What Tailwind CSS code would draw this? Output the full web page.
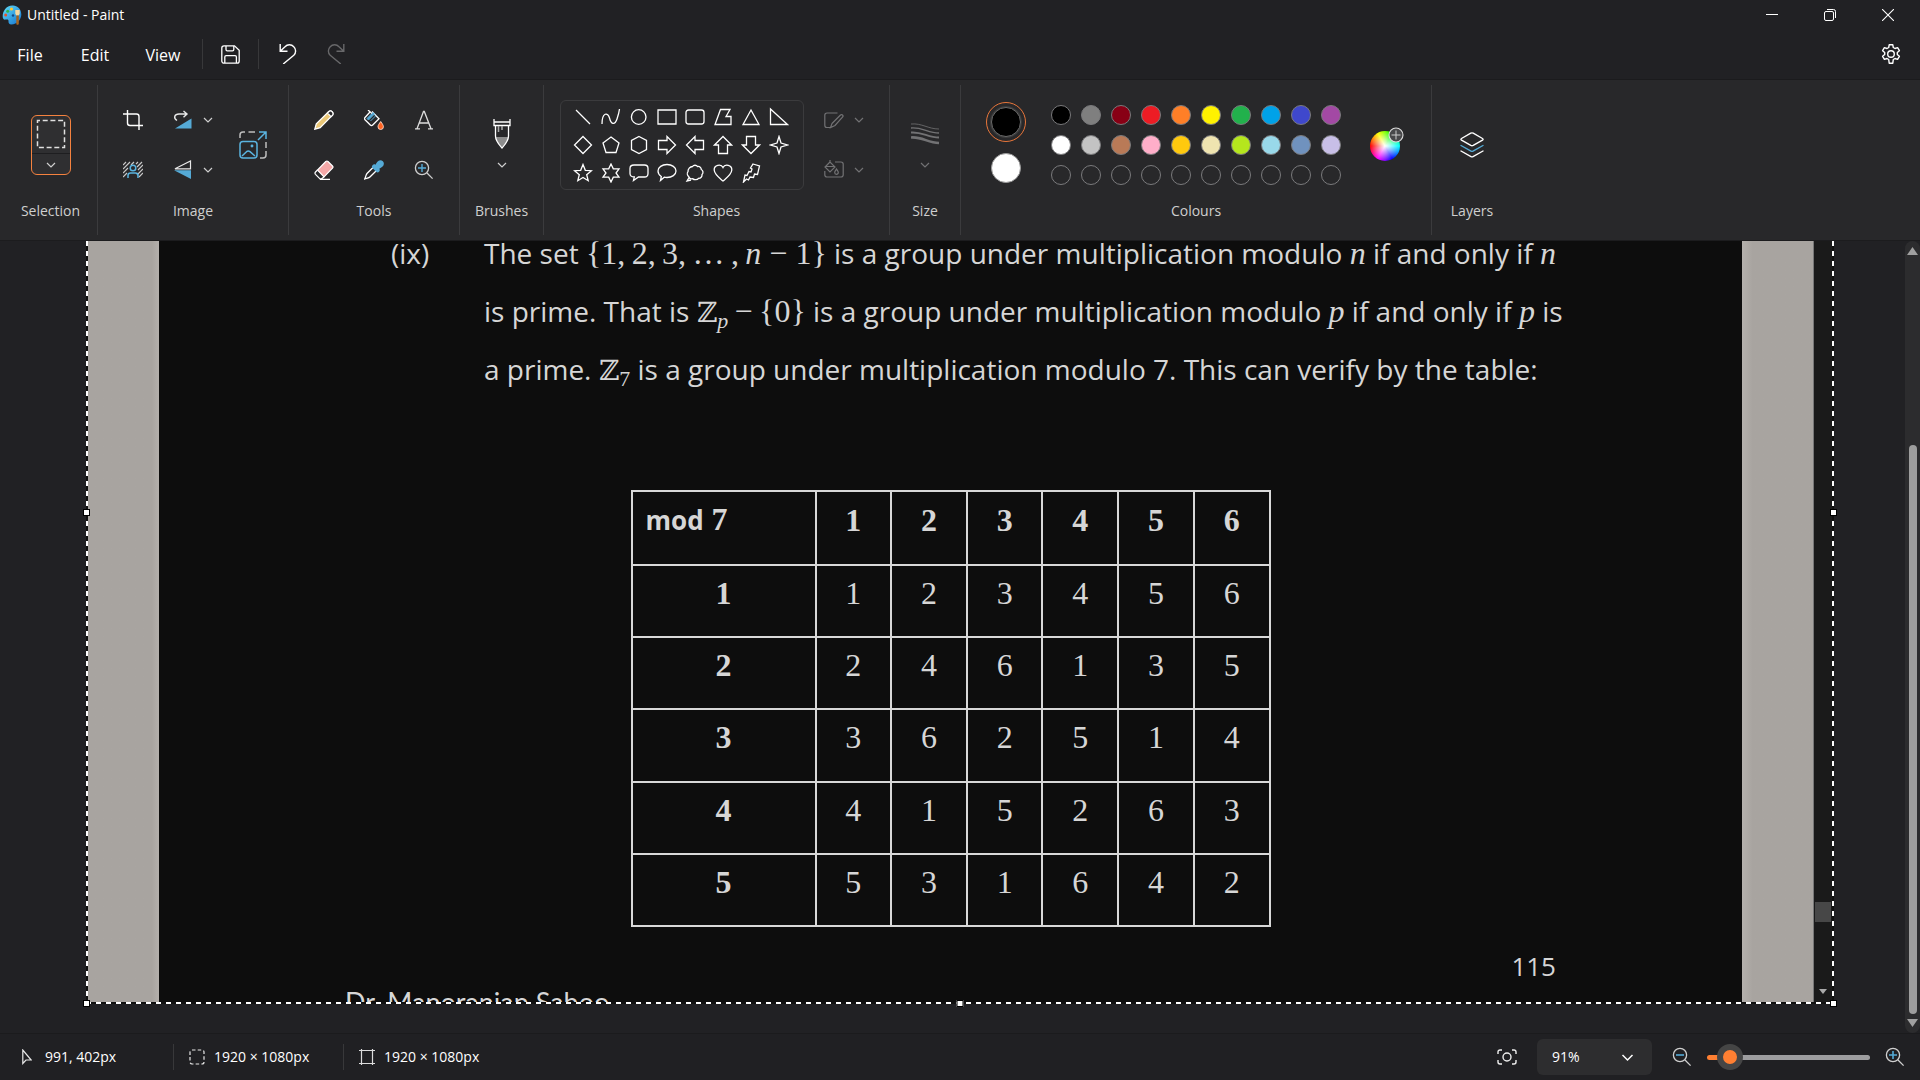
<!DOCTYPE html>
<html lang="en-GB">
<head>
<meta charset="utf-8">
<title>Untitled - Paint</title>
<script src="https://cdn.jsdelivr.net/npm/@tailwindcss/browser@4"></script>
</head>
<body class="flex h-screen flex-col overflow-hidden bg-[#212124] font-['Open_Sans','Noto_Sans',sans-serif] text-sm text-white">

<!-- Icon shapes used more than once -->
<svg class="hidden">
  <symbol id="chev" viewBox="0 0 12 12"><path d="M2 4l4 4 4-4" fill="none" stroke="currentColor" stroke-width="1.2"/></symbol>
  <symbol id="lens" viewBox="0 0 20 20"><g fill="none" stroke="currentColor" stroke-width="1.3"><circle cx="8" cy="8" r="6.6"/><path d="M13 13l5.6 5.6"/></g></symbol>
</svg>

<header>
  <div class="flex h-[30px] items-center justify-between">
    <div class="flex items-center gap-[5px] pl-[2px]">
      <svg class="size-5" viewBox="0 0 20 20">
        <defs><linearGradient id="pal" x1="0" y1="0" x2="1" y2="1"><stop offset="0" stop-color="#5fdcf8"/><stop offset="1" stop-color="#1673cf"/></linearGradient></defs>
        <path d="M11 .6C4.500 .2 .6 6 .7 11.500c0 2 1.100 3.600 3 3.100 1.800-.5 3-.2 2.800 1.600-.2 1.900.8 3.200 2.800 3.200 6 0 10-5.200 10-10C19.300 4.100 15.500.8 11 .6z" fill="url(#pal)"/>
        <circle cx="9.500" cy="4" r="1.600" fill="#ffc52e"/><circle cx="5.700" cy="6.200" r="1.500" fill="#32b34a"/><circle cx="3.700" cy="10" r="1.500" fill="#e4542c"/><circle cx="11" cy="10.500" r="1.200" fill="#134a86"/>
        <path d="M13.300 5h4.400v3.500l-.8 2h-2.800l-.8-2z" fill="#f6d7a0"/><path d="M14.300 10.500h2.500v8.200c0 1.300-2.500 1.300-2.500 0z" fill="#a5631d"/>
      </svg>
      <h1>Untitled - Paint</h1>
    </div>
    <div class="flex pr-[3px]">
      <button aria-label="Minimise" class="flex h-[30px] w-[58px] items-center justify-center"><svg class="size-3" viewBox="0 0 12 12"><path d="M0 5.500h12" stroke="#fff"/></svg></button>
      <button aria-label="Restore" class="flex h-[30px] w-[58px] items-center justify-center"><svg class="size-3" viewBox="0 0 12 12" fill="none" stroke="#fff"><rect x=".5" y="2.500" width="9" height="9" rx="1.500"/><path d="M3 .5h6.500a2 2 0 0 1 2 2V9"/></svg></button>
      <button aria-label="Close" class="flex h-[30px] w-[58px] items-center justify-center"><svg class="size-3" viewBox="0 0 12 12"><path d="M0 0l12 12M12 0L0 12" stroke="#fff" stroke-width="1.100"/></svg></button>
    </div>
  </div>

  <nav class="flex h-[50px] items-center justify-between border-b border-[#1b1b1d] pb-px">
    <div class="flex items-center text-base">
      <button class="w-[60px] pt-[2px]">File</button>
      <button class="w-[70px] pt-[2px]">Edit</button>
      <button class="w-[66px] pt-[2px]">View</button>
      <span class="ml-[6px] h-[30px] w-px bg-[#38383a]"></span>
      <button aria-label="Save" class="flex w-[55px] justify-center"><svg class="size-[19px]" viewBox="0 0 19 19" fill="none" stroke="#fff" stroke-width="1.300"><path d="M3 .8h10.500l4.700 4.400V16a2.200 2.200 0 0 1-2.200 2.200H3A2.200 2.200 0 0 1 .8 16V3A2.200 2.200 0 0 1 3 .8z"/><path d="M5 1v3.500c0 .8.500 1.300 1.300 1.300h5.200c.8 0 1.300-.5 1.300-1.300V1M3.800 18v-6c0-.8.500-1.300 1.300-1.300h9c.8 0 1.300.5 1.300 1.300v6"/></svg></button>
      <span class="h-[30px] w-px bg-[#38383a]"></span>
      <button aria-label="Undo" class="ml-[5px] flex w-12 justify-center"><svg class="size-5" viewBox="0 0 20 20" fill="none" stroke="#fff" stroke-width="1.400"><path d="M2.200 0v7.300h7.300M2.500 7L7 2.700a6 6 0 0 1 8.800 0 6 6 0 0 1 0 8.600L5.200 20"/></svg></button>
      <button aria-label="Redo" disabled class="flex w-12 justify-center text-[#68686a]"><svg class="size-5" viewBox="0 0 20 20" fill="none" stroke="currentColor" stroke-width="1.400"><path d="M17.800 0v7.300h-7.300M17.500 7L13 2.700a6 6 0 0 0-8.800 0 6 6 0 0 0 0 8.600L14.800 20"/></svg></button>
    </div>
    <button aria-label="Settings" class="mr-[19px]"><svg class="size-5" viewBox="0 0 20 20" fill="none" stroke="#fff" stroke-width="1.400" stroke-linejoin="round"><path d="M8.200.8h3.600l.5 2.700 1.700 1 2.600-.9 1.800 3.100-2.100 1.800v2l2.100 1.800-1.800 3.100-2.600-.9-1.700 1-.5 3.700H8.200l-.5-3.700-1.700-1-2.600.9-1.800-3.100 2.100-1.800v-2L1.600 6.700l1.800-3.100 2.600.9 1.700-1z"/><circle cx="10" cy="10" r="3.300"/></svg></button>
  </nav>
</header>

<section aria-label="Tools" class="flex h-[161px] shrink-0 border-b border-[#1c1c1e] bg-[#28282a] py-[5px] text-[#cfcfcf]">
  <div class="flex w-[98px] flex-col border-r border-[#3b3b3d] pl-1">
    <div class="flex h-[119px] items-center justify-center">
      <button aria-label="Rectangular selection" class="flex h-[60px] w-10 flex-col items-center rounded-md border border-[#f5823f] bg-[#2f2f31]">
        <svg class="mt-[3px] size-[30px]" viewBox="0 0 30 30"><rect x="1.500" y="1.500" width="27" height="27" fill="none" stroke="#e0e0e0" stroke-width="1.500" stroke-dasharray="5 2.710" stroke-dashoffset="2.500"/></svg>
        <span class="mt-[4px] h-px w-full bg-[#1e1e20]"></span>
        <svg class="mt-[5px] size-3"><use href="#chev"/></svg>
      </button>
    </div>
    <div class="text-center leading-[14px]">Selection</div>
  </div>

  <div class="flex w-[191px] flex-col border-r border-[#3b3b3d]">
    <div class="flex h-[119px] items-center pl-[15px]">
      <div class="flex flex-col">
        <button aria-label="Crop" class="flex h-[50px] w-10 items-center justify-center"><svg class="size-5" viewBox="0 0 20 20" fill="none" stroke="#fff" stroke-width="1.400"><path d="M0 4h13.500c1.500 0 2.500 1 2.500 2.500V20M4.500 0v13c0 1.500 1 2.500 2.500 2.500h13"/></svg></button>
        <button aria-label="Remove background" class="flex h-[50px] w-10 items-center justify-center"><svg class="size-5" viewBox="0 0 20 20" fill="none" stroke="#c9c9c9" stroke-width="1.200"><path d="M0 5l3-3M0 9l7-7M0 13l5-5M0 17l4-4M8 5l3-3M13 4l2-2M14 7l5-5M15 10l5-5M14 15l6-6M16 17l4-4"/><g stroke="#5ab4e0" stroke-width="1.500"><circle cx="10" cy="8" r="2.800"/><path d="M5 18v-2.500C5 14 6 13 7.500 13h5c1.500 0 2.500 1 2.500 2.500V18"/></g></svg></button>
      </div>
      <div class="ml-5 flex flex-col">
        <button aria-label="Rotate" class="flex h-[50px] items-center gap-[9px]"><svg class="size-5" viewBox="0 0 20 20"><path d="M18.500 8.500V18.500H2z" fill="#55aad6"/><path d="M4 10.500C0 8 1.500 4 6 4h8M10.500 1L14 4l-3.500 3.200" fill="none" stroke="#e8e8e8" stroke-width="1.400"/></svg><svg class="size-3"><use href="#chev"/></svg></button>
        <button aria-label="Flip" class="flex h-[50px] items-center gap-[9px]"><svg class="size-5" viewBox="0 0 20 20"><path d="M17.500 1v7.800H2z" fill="none" stroke="#e8e8e8" stroke-width="1.200"/><path d="M1 10.300h17V19z" fill="#55aad6"/></svg><svg class="size-3"><use href="#chev"/></svg></button>
      </div>
      <button aria-label="Resize and skew" class="ml-[25px]"><svg class="size-7" viewBox="0 0 28 28" fill="none" stroke-width="1.500"><path d="M1 7V4c0-2 1-3 3-3h2M9.500 1H16M27 11v6M27 20v4c0 2-1 3-3 3h-3" stroke="#bdbdbd"/><g stroke="#5ab4e0"><path d="M19 9L27 1M20 1h7v7"/><rect x="1" y="10.500" width="17" height="16.500" rx="3"/><path d="M3 25l4.500-4.300c1.200-1 2.300-1 3.500 0l5 4.300"/><circle cx="13" cy="15" r=".7" fill="#5ab4e0"/></g></svg></button>
    </div>
    <div class="text-center leading-[14px]">Image</div>
  </div>

  <div class="flex w-[171px] flex-col border-r border-[#3b3b3d]">
    <div class="grid h-[119px] grid-cols-[50px_50px_50px] grid-rows-[50px_50px] content-center justify-center">
      <button aria-label="Pencil" class="flex items-center justify-center"><svg class="size-5" viewBox="0 0 20 20"><path d="M.8 19.200l1.500-5.400L14.800 1.500c2.200-1.700 5.300 1.100 3.700 3.700L6.200 17.700z" fill="#ebc878" stroke="#fff" stroke-width="1.300"/><path d="M13.500 3l1.500-1.500c2.200-1.500 5 1 3.600 3.600L17 6.700z" fill="#28282a" stroke="#fff" stroke-width="1.200"/></svg></button>
      <button aria-label="Fill" class="flex items-center justify-center"><svg class="size-5" viewBox="0 0 20 20"><path d="M6 2L1 7.500c-.7.800-.7 1.500 0 2.200l5.300 5.300c.8.800 1.600.8 2.400 0L15 8.700 8 1.500" fill="none" stroke="#fff" stroke-width="1.300"/><path d="M3 8.500L9 2.500l1.500 1.500L4.500 10zM6.500 11L12 5.500" fill="#55aad6" stroke="#55aad6"/><path d="M4 0l4 3.500" stroke="#fff" stroke-width="1.300"/><path d="M16.700 11.500c1.500 2.300 2.700 3.600 2.700 5.300a2.700 2.700 0 0 1-5.400 0c0-1.700 1.200-3 2.700-5.300z" fill="#ff6422" stroke="#ffd9c8" stroke-width=".9"/></svg></button>
      <button aria-label="Text" class="flex items-center justify-center"><svg class="size-5" viewBox="0 0 20 20" fill="none" stroke="#dcdcdc" stroke-width="1.300"><path d="M3 18.800L9.500 1.500h.8l6.700 17.300M5.200 13h9.400M1 18.800h5M14 18.800h5"/></svg></button>
      <button aria-label="Eraser" class="flex items-center justify-center"><svg class="size-5" viewBox="0 0 20 20"><path d="M11.800 1.500c.7-.7 1.500-.7 2.200 0l4.500 4.500c.7.700.7 1.500 0 2.200L10 17 3.500 10z" fill="#f4a8a8" stroke="#fff" stroke-width="1.200"/><path d="M3.500 10L1.500 12c-.7.800-.7 1.500 0 2.300l4 4c.6.600 1.500.8 2.300.1L10 17M5.800 19.300H16" fill="none" stroke="#fff" stroke-width="1.200"/></svg></button>
      <button aria-label="Colour picker" class="flex items-center justify-center"><svg class="size-5" viewBox="0 0 20 20"><path d="M9.500 7L3 13.500c-1 1.200-.8 2.200-2.300 5.500 3-1 4.500-1.200 5.500-2.300L13 10" fill="none" stroke="#fff" stroke-width="1.300"/><path d="M8.500 5.200c1-1.200 2-1.200 3-.5 1-2 2.500-4.500 4.700-4.500 2.500 0 4 1.700 3.600 4-.3 2-2.200 3.300-4.500 4.500.8 1 .7 2-.2 3-1 1-2 .9-3 0L8.500 8c-.8-.8-.8-1.900 0-2.800z" fill="#55aad6"/></svg></button>
      <button aria-label="Magnifier" class="flex items-center justify-center"><svg class="size-5" viewBox="0 0 20 20"><use href="#lens" width="20" height="20"/><path d="M8 4v8M4 8h8" stroke="#55aad6" stroke-width="1.400"/></svg></button>
    </div>
    <div class="text-center leading-[14px]">Tools</div>
  </div>

  <div class="flex w-[84px] flex-col border-r border-[#3b3b3d]">
    <button aria-labelledby="brushes" class="flex h-[119px] flex-col items-center justify-center gap-[10px]">
      <svg class="h-[30px] w-[18px]" viewBox="0 0 18 30"><path d="M3 18h12c0 5-3 7-6 10.500C6 25 3 23 3 18z" fill="#8d8d8d"/><path d="M1 0v6.500h16V0M1 3h16M2.500 6.500V17c0 5 3 8 6.500 12 3.500-4 6.500-7 6.500-12V6.500" fill="none" stroke="#fff" stroke-width="1.300"/><path d="M5.500 7v6M9 7v4" stroke="#aaa" stroke-width="1.500"/></svg>
      <svg class="size-3"><use href="#chev"/></svg>
    </button>
    <div id="brushes" class="text-center leading-[14px]">Brushes</div>
  </div>

  <div class="flex w-[346px] flex-col border-r border-[#3b3b3d]">
    <div class="flex h-[119px] items-center gap-5 pl-4">
      <div id="shapes" class="grid h-[90px] w-[244px] grid-cols-[repeat(8,28px)] content-center rounded-md border border-[#3b3b3d] pl-2 text-white"></div>
      <div class="flex flex-col text-[#727274]">
        <button aria-label="Shape outline" disabled class="flex h-[50px] items-center gap-[9px]"><svg class="size-5" viewBox="0 0 20 20" fill="none" stroke="currentColor" stroke-width="1.200"><path d="M13.500 3H3C1.500 3 .8 4 .8 5.200v10C.8 16.500 1.700 17.500 3 17.500h3.500"/><path d="M8 13.500L16.500 5c1.500-1.200 3.200.5 2.200 2L11 15.500 6.500 17.500z"/></svg><svg class="size-3"><use href="#chev"/></svg></button>
        <button aria-label="Shape fill" disabled class="flex h-[50px] items-center gap-[9px]"><svg class="size-5" viewBox="0 0 20 20" fill="none" stroke="currentColor" stroke-width="1.200"><path d="M11 2h6c1.500 0 2.200.9 2.200 2.200v10.600c0 1.400-.9 2.200-2.200 2.200H3C1.600 17 .8 16.200.8 14.800V11"/><path d="M6 0v3M6 2L1 7l5 5 5-5zM1.500 6.500h9"/><path d="M12.500 9c1 1.600 1.800 2.300 1.800 3.500a1.800 1.800 0 0 1-3.600 0c0-1.200.8-1.900 1.800-3.500z"/></svg><svg class="size-3"><use href="#chev"/></svg></button>
      </div>
    </div>
    <div class="text-center leading-[14px]">Shapes</div>
  </div>

  <div class="flex w-[71px] flex-col border-r border-[#3b3b3d]">
    <button aria-labelledby="size" disabled class="flex h-[119px] flex-col items-center justify-center gap-[10px] text-[#727274]">
      <svg class="h-[30px] w-7" viewBox="0 0 28 30" fill="none" stroke="currentColor"><path d="M0 5c11-1 17 5 28 5" stroke-width=".8"/><path d="M0 9c11-1 17 5 28 5" stroke-width="1.400"/><path d="M0 13.500c11-1 17 5 28 5" stroke-width="2"/><path d="M0 18.500c11-1 17 5.500 28 5.500" stroke-width="2.600"/></svg>
      <svg class="size-3"><use href="#chev"/></svg>
    </button>
    <div id="size" class="text-center leading-[14px]">Size</div>
  </div>

  <div class="flex w-[471px] flex-col border-r border-[#3b3b3d]">
    <div class="flex h-[119px] items-center pl-[25px]">
      <div class="flex flex-col items-center gap-[11px] pb-[5px]">
        <button aria-label="Colour 1" class="flex size-10 items-center justify-center rounded-full border border-[#e8763a]"><span class="size-[30px] rounded-full border border-[#6a6a6a] bg-black ring-1 ring-[#3c3c3c]"></span></button>
        <button aria-label="Colour 2" class="size-[30px] rounded-full border border-[#9a9a9a] bg-white"></button>
      </div>
      <div id="swatches" class="ml-5 grid grid-cols-[repeat(10,30px)] grid-rows-[repeat(3,30px)]"></div>
      <button aria-label="Edit colours" class="relative mt-[3px] ml-6 size-[30px] rounded-full bg-[radial-gradient(circle,#ffffff_0%,#ffffff00_70%),conic-gradient(#80ff00_0deg,#00ff00_30deg,#00ffff_90deg,#0000ff_150deg,#ff00ff_210deg,#ff0000_270deg,#ffff00_330deg,#80ff00_360deg)]">
        <svg class="absolute -top-1 -right-1 size-4" viewBox="0 0 16 16"><circle cx="8" cy="8" r="7" fill="#48484a" stroke="#ddd" stroke-width="1.100"/><path d="M8 3.500v9M3.500 8h9" stroke="#ccc"/></svg>
      </button>
    </div>
    <div class="text-center leading-[14px]">Colours</div>
  </div>

  <div class="flex w-20 flex-col">
    <button aria-labelledby="layers" class="flex h-[119px] items-center justify-center"><svg class="h-[26px] w-6" viewBox="0 0 24 26" fill="none" stroke="#fff" stroke-width="1.400" stroke-linejoin="round" stroke-linecap="round"><path d="M10.800 1.200c.8-.4 1.600-.4 2.400 0l9.300 5.300c.8.500.8 1.100 0 1.600l-9.300 5.300c-.8.400-1.600.4-2.400 0L1.500 8.100c-.8-.5-.8-1.100 0-1.600z"/><path d="M1 13.500l10 5.600c.7.400 1.300.4 2 0l10-5.600" stroke="#55aad6"/><path d="M1 19l10 5.600c.7.400 1.300.4 2 0L23 19"/></svg></button>
    <div id="layers" class="text-center leading-[14px]">Layers</div>
  </div>
</section>

<main class="relative flex min-h-0 flex-1 overflow-hidden px-[86px] pb-[30px]">
  <div class="relative flex min-w-0 flex-1">
    <div class="flex min-w-0 flex-1 overflow-hidden bg-[#aaa6a2]">
      <div class="w-[73px] shrink-0 bg-linear-to-r from-[#a8a4a0] from-90% to-[#b4b0ac]"></div>
      <article class="min-w-0 flex-1 overflow-hidden bg-[#0d0d0d] text-[26px] text-[#d6d6d6]">
        <div class="-mt-[17px] flex pr-[186px] pl-[232px] text-[28px] leading-[58px]">
          <span class="w-[93px] shrink-0">(ix)</span>
          <div class="min-w-0 flex-1 whitespace-nowrap">
            <p class="h-[58px] [text-align-last:justify]">The set <span class="inline-block font-['Liberation_Serif',serif] text-[32px] leading-none [text-align-last:left]">{1,&thinsp;2,&thinsp;3,&thinsp;…&thinsp;,&thinsp;<i>n</i> − 1}</span> is a group under multiplication modulo <i class="font-['Liberation_Serif',serif] text-[32px] leading-none">n</i> if and only if <i class="font-['Liberation_Serif',serif] text-[32px] leading-none">n</i></p>
            <p class="h-[58px] [text-align-last:justify]">is prime. That is <span class="inline-block font-['Liberation_Serif','DejaVu_Serif',serif] text-[32px] leading-none [text-align-last:left]"><span class="text-[28px]">ℤ</span><sub class="text-[22px]"><i>p</i></sub>&thinsp;−&thinsp;{0}</span> is a group under multiplication modulo <i class="font-['Liberation_Serif',serif] text-[32px] leading-none">p</i> if and only if <i class="font-['Liberation_Serif',serif] text-[32px] leading-none">p</i> is</p>
            <p class="h-[58px]">a prime. <span class="font-['Liberation_Serif','DejaVu_Serif',serif] leading-none">ℤ<sub class="text-[22px]">7</sub></span> is a group under multiplication modulo 7. This can verify by the table:</p>
          </div>
        </div>
        <table class="mx-auto mt-[92px] h-[437px] w-[640px] table-fixed border-collapse font-['Liberation_Serif',serif] text-[32px] leading-10">
          <colgroup><col class="w-[184px]"><col span="6"></colgroup>
          <tbody id="table"></tbody>
        </table>
        <div class="mt-[21px] pr-[186px] text-right leading-9">115</div>
        <div class="pl-[186px] font-['Lato',sans-serif] text-[27px] leading-9">Dr. Manoranjan Sahoo</div>
      </article>
      <div class="w-[71px] shrink-0 bg-linear-to-r from-[#b4b0ac] to-[#a8a4a0] to-15%"></div>
      <div class="flex w-[21px] shrink-0 flex-col items-center justify-end gap-[67px] border-l border-[#777] bg-[#1a1a1a] pr-[2px] pb-[9px]">
        <span class="h-5 w-4 bg-[#474747]"></span>
        <svg class="h-[5px] w-2" viewBox="0 0 8 5"><path d="M0 0h8L4 5z" fill="#aaa"/></svg>
      </div>
    </div>
    <!-- Selection marquee: alternating five-pixel dashes and drag handles -->
    <div class="absolute inset-y-0 left-0 w-[2px] bg-[repeating-linear-gradient(to_bottom,#fff_0_5px,#111_5px_10px)]"></div>
    <div class="absolute inset-y-0 right-0 w-[2px] bg-[repeating-linear-gradient(to_bottom,#fff_0_5px,#111_5px_10px)]"></div>
    <div class="absolute inset-x-0 -bottom-px h-[2px] bg-[repeating-linear-gradient(to_right,#fff_0_5px,#111_5px_10px)]"></div>
    <i class="absolute top-[268px] -left-[3px] size-[7px] border border-black bg-white"></i>
    <i class="absolute top-[268px] -right-[3px] size-[7px] border border-black bg-white"></i>
    <i class="absolute -bottom-[4px] -left-[3px] size-[7px] border border-black bg-white"></i>
    <i class="absolute -right-[3px] -bottom-[4px] size-[7px] border border-black bg-white"></i>
    <i class="absolute -bottom-[4px] left-1/2 size-[7px] -translate-x-1/2 border border-black bg-white"></i>
  </div>
  <div class="absolute inset-y-0 right-0 flex w-[15px] flex-col items-center justify-between rounded-full bg-[#2c2c2e] pt-[6px] pb-[6px]">
    <svg class="h-2 w-[11px]" viewBox="0 0 11 8"><path d="M5.500 0L11 8H0z" fill="#a0a0a0"/></svg>
    <span class="mt-auto mb-[5px] h-[73%] w-2 rounded-full bg-[#9e9e9e]"></span>
    <svg class="h-2 w-[11px]" viewBox="0 0 11 8"><path d="M0 0h11L5.500 8z" fill="#a0a0a0"/></svg>
  </div>
</main>

<footer class="flex h-[47px] shrink-0 items-center border-t border-[#1b1b1d] bg-[#202023] pr-[15px]">
  <div class="flex w-[173px] items-center gap-[13px] pl-[22px]"><svg class="h-4 w-[10px]" viewBox="0 0 10 16"><path d="M.8 1v13.500L4 11h5.200z" fill="none" stroke="#e8e8e8" stroke-width="1.200"/></svg>991, 402px</div>
  <div class="flex h-[26px] w-[170px] items-center gap-[9px] border-l border-[#38383a] pl-[15px]"><svg class="size-4" viewBox="0 0 16 16"><rect x="1" y="1" width="14" height="14" rx="2" fill="none" stroke="#e8e8e8" stroke-width="1.200" stroke-dasharray="3.500 2.200"/></svg>1920 × 1080px</div>
  <div class="flex h-[26px] items-center gap-[9px] border-l border-[#38383a] pl-[15px]"><svg class="size-4" viewBox="0 0 16 16" fill="none" stroke="#dcdcdc" stroke-width="1.200"><path d="M2.500 0v16M13.500 0v16M0 1.500h16M0 14.500h16"/></svg>1920 × 1080px</div>
  <div class="ml-auto flex items-center">
    <button aria-label="Fit to window" class="mr-5"><svg class="size-5" viewBox="0 0 20 20" fill="none" stroke="#eee" stroke-width="1.400"><circle cx="10" cy="10" r="4"/><path d="M1 7V5c0-1.300.8-2 2-2h2M1 13v2c0 1.300.8 2 2 2h2M19 7V5c0-1.300-.8-2-2-2h-2M19 13v2c0 1.300-.8 2-2 2h-2"/></svg></button>
    <div class="relative">
      <select aria-label="Zoom level" class="h-9 w-[115px] appearance-none rounded-md bg-[#2d2d2f] pl-[15px]"><option>91%</option></select>
      <svg class="pointer-events-none absolute top-[11px] right-[17px] size-[15px]"><use href="#chev"/></svg>
    </div>
    <button aria-label="Zoom out" class="ml-5 text-[#d0d0d0]"><svg class="size-5" viewBox="0 0 20 20"><use href="#lens" width="20" height="20"/><path d="M4 8h8" stroke="#55aad6" stroke-width="1.600"/></svg></button>
    <input type="range" aria-label="Zoom" value="7" class="mx-[15px] h-[26px] w-[163px] appearance-none bg-transparent [&::-webkit-slider-runnable-track]:h-[5px] [&::-webkit-slider-runnable-track]:rounded-full [&::-webkit-slider-runnable-track]:bg-linear-to-r [&::-webkit-slider-runnable-track]:from-[#ff7f32] [&::-webkit-slider-runnable-track]:from-[13%] [&::-webkit-slider-runnable-track]:to-[#9d9d9f] [&::-webkit-slider-runnable-track]:to-[13%] [&::-webkit-slider-thumb]:-mt-[11px] [&::-webkit-slider-thumb]:size-[26px] [&::-webkit-slider-thumb]:appearance-none [&::-webkit-slider-thumb]:rounded-full [&::-webkit-slider-thumb]:border-[6px] [&::-webkit-slider-thumb]:border-[#454545] [&::-webkit-slider-thumb]:bg-[#ff7f32]">
    <button aria-label="Zoom in" class="text-[#d0d0d0]"><svg class="size-5" viewBox="0 0 20 20"><use href="#lens" width="20" height="20"/><path d="M8 4v8M4 8h8" stroke="#55aad6" stroke-width="1.600"/></svg></button>
  </div>
</footer>

<script>
  const shapes = [
    ['Line', 'M3 3l14 14'],
    ['Curve', 'M1 17C1 5 7 5 8.500 11s5 8 7.500 1c1-3 2-6 2.500-10'],
    ['Oval', 'M17 10a7.300 7.300 0 1 1-14.600 0 7.300 7.300 0 0 1 14.600 0z'],
    ['Rectangle', 'M1 3h18v14H1z'],
    ['Rounded rectangle', 'M3.500 3h13A2.500 2.500 0 0 1 19 5.500v9a2.500 2.500 0 0 1-2.500 2.500h-13A2.500 2.500 0 0 1 1 14.500v-9A2.500 2.500 0 0 1 3.500 3z'],
    ['Polygon', 'M7.500 2.500H17L13 9.500h5v8H2z'],
    ['Triangle', 'M10 3l8 14.500H2z'],
    ['Right-angled triangle', 'M1.500 2v15.500h17z'],
    ['Diamond', 'M10 1.500l8.500 8.500-8.500 8.500L1.500 10z'],
    ['Pentagon', 'M10 2l8 6-3 9.500H5L2 8z'],
    ['Hexagon', 'M10 1.500l7.500 4v9l-7.500 4-7.500-4v-9z'],
    ['Right arrow', 'M1.500 5.500H10V1.500l8.500 8.500-8.500 8.500v-4H1.500z'],
    ['Left arrow', 'M18.500 5.500H10V1.500L1.500 10l8.500 8.500v-4h8.500z'],
    ['Up arrow', 'M5.500 18.500V10h-4L10 1.500l8.500 8.500h-4v8.500z'],
    ['Down arrow', 'M5.500 1.500V10h-4l8.500 8.500 8.500-8.500h-4V1.500z'],
    ['Four-point star', 'M10 1.500l2 6.500 6.500 2-6.500 2-2 6.500L8 12l-6.500-2L8 8z'],
    ['Five-point star', 'M10 1.500l2.300 5.800 6.200.4-4.800 4 1.500 6-5.200-3.300-5.200 3.300 1.500-6-4.800-4 6.200-.4z'],
    ['Six-point star', 'M10 1l2.300 4.800H18L15 10l3 4.200h-5.700L10 19l-2.300-4.800H2L5 10 2 5.800h5.700z'],
    ['Rounded rectangular callout', 'M5 2h10.500C17.700 2 19 3.300 19 5.500v5c0 2.200-1.300 3.500-3.500 3.500H9.500L4.500 17.500l.8-3.500C2.500 14 1 12.700 1 10.500v-5C1 3.300 2.500 2 5 2z'],
    ['Oval callout', 'M10 1.500c5 0 9 2.800 9 6.500s-4 6.500-9 6.500c-1.300 0-2 0-2.800-.3L3.500 17.500l.8-4C2 12 1 10.200 1 8c0-3.700 4-6.500 9-6.500z'],
    ['Cloud callout', 'M7.500 3.500c1-1.700 4-1.700 5 0 2.300-.3 3.700 1 3.800 3 2 1 2.200 3.600.7 5 .3 2-1.300 4-3.500 3.800-1.200 1.700-4.300 1.900-5.700.4-1.600.5-3.400-.3-4-2-1.500-1.200-2-3.500-.8-5C2.700 6 5 3.600 7.500 3.500zM4 14.500L2 18l4-1'],
    ['Heart', 'M10 18C6 14.500 1.500 11.500 1.200 7 1 2 8 .5 10 4.500c2-4 9-2.500 8.800 2.500-.3 4.500-4.800 7.500-8.800 11z'],
    ['Lightning', 'M12 1l6.500 2-2 8.500-3-.5-1 3.500-3.500-.5-1.500 3L5.500 16l-3 3 1.500-7 2 .5L8 8.500l2 .5 1-3-1.500-1z'],
  ];
  document.getElementById('shapes').innerHTML = shapes.map(([name, d]) =>
    `<button aria-label="${name}" class="flex size-7 items-center justify-center"><svg class="size-5" viewBox="0 0 20 20"><path d="${d}" fill="none" stroke="currentColor" stroke-width="1.300"/></svg></button>`).join('');

  const colours = ['#000000','#7f7f7f','#880015','#ed1c24','#ff7f27','#fff200','#22b14c','#00a2e8','#3f48cc','#a349a4',
    '#ffffff','#c3c3c3','#b97a57','#ffaec9','#ffc90e','#efe4b0','#b5e61d','#99d9ea','#7092be','#c8bfe7'];
  document.getElementById('swatches').innerHTML = Array.from({ length: 30 }, (_, i) =>
    `<button aria-label="Colour ${colours[i] || 'empty'}" class="m-[5px] size-5 rounded-full border border-[#7a7a7c]" style="background:${colours[i] || 'transparent'}"></button>`).join('');

  const n = [1, 2, 3, 4, 5, 6];
  const head = `<tr class="h-[74px]"><th class="border-2 border-[#d8d8d8] pt-[7px] pl-[13px] text-left align-top"><span class="font-['Open_Sans',sans-serif] text-[26px]">mod</span> 7</th>` +
    n.map(c => `<th class="border-2 border-[#d8d8d8] pt-2 align-top">${c}</th>`).join('') + '</tr>';
  document.getElementById('table').innerHTML = head + n.slice(0, 5).map(r =>
    `<tr class="h-[72px]"><th class="border-2 border-[#d8d8d8] pt-[7px] align-top">${r}</th>` +
    n.map(c => `<td class="border-2 border-[#d8d8d8] pt-[7px] text-center align-top">${r * c % 7}</td>`).join('') + '</tr>').join('');
</script>
</body>
</html>
